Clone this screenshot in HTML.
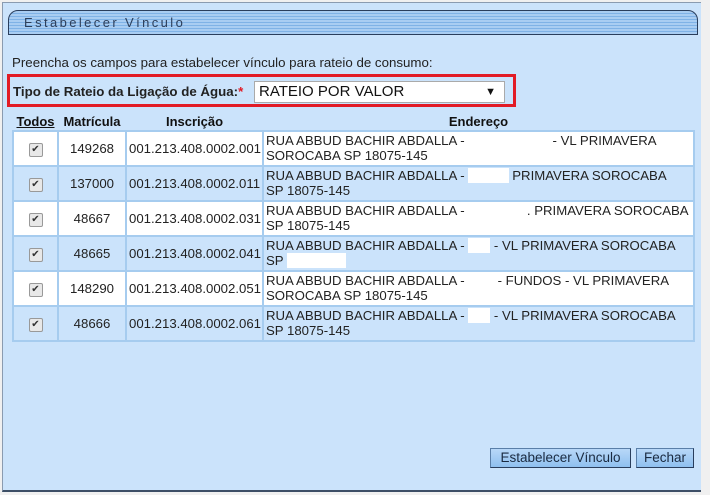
<!DOCTYPE html>
<html><head><meta charset="utf-8"><style>
body{margin:0;width:710px;height:495px;background:#f0f0f0;font-family:"Liberation Sans",Arial,sans-serif;position:relative;overflow:hidden}
.panel{position:absolute;left:2px;top:2px;width:698px;height:487px;background:#cbe3fb;border-left:1px solid #8a9bb0;border-top:1px solid #8a9bb0;border-bottom:2px solid #3d4f66}
.tab{position:absolute;left:8px;top:10px;width:688px;height:23px;border:1px solid #2a3e5c;border-radius:10px 10px 0 0;
background:repeating-linear-gradient(#a9cdf2 0 2px,#7fb2e6 2px 3px);}
.tab span{position:absolute;left:15px;top:4px;font-size:13px;letter-spacing:2.4px;color:#2c3e5a}
.t{position:absolute;font-size:13.3px;color:#222}
.red{position:absolute;left:7px;top:74px;width:503px;height:27px;border:3px solid #e21b25}
.sel{position:absolute;left:254px;top:81px;width:251px;height:22px;background:#fff;border:1px solid #aaa;box-sizing:border-box;font-size:15px;padding:1px 4px;color:#111}
.sel b{position:absolute;right:8px;top:4px;font-size:11px}
table{position:absolute;left:12px;top:112px;width:683px;table-layout:fixed;border-collapse:collapse;font-size:13.2px;color:#222}
th{background:#cbe3fb;height:18px;padding:0;font-size:13px;color:#111}
td{border:2px solid #a6ccef;height:32px;padding:0 2px;vertical-align:middle;line-height:15px;white-space:nowrap;overflow:hidden}
tr.w td{background:#fff}tr.b td{background:#cbe3fb}
td.c{text-align:center}
.cb{display:inline-block;width:12px;height:12px;border:1px solid #999;border-radius:2px;background:#e8e8e8;font-size:10px;line-height:12px;text-align:center;color:#333}
td.a{vertical-align:top;padding-top:1px}
.btn{position:absolute;top:448px;height:20px;background:linear-gradient(#b8d8f8,#8fc0ef);border:1px solid #5a7fa8;border-right-color:#2a3e5c;border-bottom-color:#2a3e5c;font-size:13.5px;color:#1a2a40;box-sizing:border-box;text-align:center;line-height:18px;white-space:nowrap}
</style></head><body>
<div class="panel"></div>
<div class="tab"><span>Estabelecer Vínculo</span></div>
<div class="t" style="left:12px;top:55px">Preencha os campos para estabelecer vínculo para rateio de consumo:</div>
<div class="red"></div>
<div class="t" style="left:13px;top:84px;font-weight:bold;font-size:13.3px">Tipo de Rateio da Ligação de Água:<span style="color:#e21b25">*</span></div>
<div class="sel">RATEIO POR VALOR<b>▼</b></div>
<table>
<colgroup><col style="width:45px"><col style="width:68px"><col style="width:137px"><col></colgroup>
<tr><th><u>Todos</u></th><th>Matrícula</th><th>Inscrição</th><th>Endereço</th></tr>
<tr class="w"><td class="c"><span class="cb">✔</span></td><td class="c">149268</td><td>001.213.408.0002.001</td><td class="a">RUA ABBUD BACHIR ABDALLA - &nbsp;&nbsp;&nbsp;&nbsp;&nbsp;&nbsp;&nbsp;&nbsp;&nbsp;&nbsp;&nbsp;&nbsp;&nbsp;&nbsp;&nbsp;&nbsp;&nbsp;&nbsp;&nbsp;&nbsp;&nbsp;&nbsp; - VL PRIMAVERA<br>SOROCABA SP 18075-145</td></tr>
<tr class="b"><td class="c"><span class="cb">✔</span></td><td class="c">137000</td><td>001.213.408.0002.011</td><td class="a">RUA ABBUD BACHIR ABDALLA - <span style="background:#fff">&nbsp;&nbsp;&nbsp;&nbsp;&nbsp;&nbsp;&nbsp;&nbsp;&nbsp;&nbsp;&nbsp;</span> PRIMAVERA SOROCABA<br>SP 18075-145</td></tr>
<tr class="w"><td class="c"><span class="cb">✔</span></td><td class="c">48667</td><td>001.213.408.0002.031</td><td class="a">RUA ABBUD BACHIR ABDALLA - &nbsp;&nbsp;&nbsp;&nbsp;&nbsp;&nbsp;&nbsp;&nbsp;&nbsp;&nbsp;&nbsp;&nbsp;&nbsp;&nbsp;&nbsp;&nbsp;. PRIMAVERA SOROCABA<br>SP 18075-145</td></tr>
<tr class="b"><td class="c"><span class="cb">✔</span></td><td class="c">48665</td><td>001.213.408.0002.041</td><td class="a">RUA ABBUD BACHIR ABDALLA - <span style="background:#fff">&nbsp;&nbsp;&nbsp;&nbsp;&nbsp;&nbsp;</span> - VL PRIMAVERA SOROCABA<br>SP <span style="background:#fff">&nbsp;&nbsp;&nbsp;&nbsp;&nbsp;&nbsp;&nbsp;&nbsp;&nbsp;&nbsp;&nbsp;&nbsp;&nbsp;&nbsp;&nbsp;&nbsp;</span></td></tr>
<tr class="w"><td class="c"><span class="cb">✔</span></td><td class="c">148290</td><td>001.213.408.0002.051</td><td class="a">RUA ABBUD BACHIR ABDALLA - &nbsp;&nbsp;&nbsp;&nbsp;&nbsp;&nbsp;&nbsp; - FUNDOS - VL PRIMAVERA<br>SOROCABA SP 18075-145</td></tr>
<tr class="b"><td class="c"><span class="cb">✔</span></td><td class="c">48666</td><td>001.213.408.0002.061</td><td class="a">RUA ABBUD BACHIR ABDALLA - <span style="background:#fff">&nbsp;&nbsp;&nbsp;&nbsp;&nbsp;&nbsp;</span> - VL PRIMAVERA SOROCABA<br>SP 18075-145</td></tr>
</table>
<div class="btn" style="left:490px;width:141px">Estabelecer Vínculo</div>
<div class="btn" style="left:636px;width:58px">Fechar</div>
</body></html>
